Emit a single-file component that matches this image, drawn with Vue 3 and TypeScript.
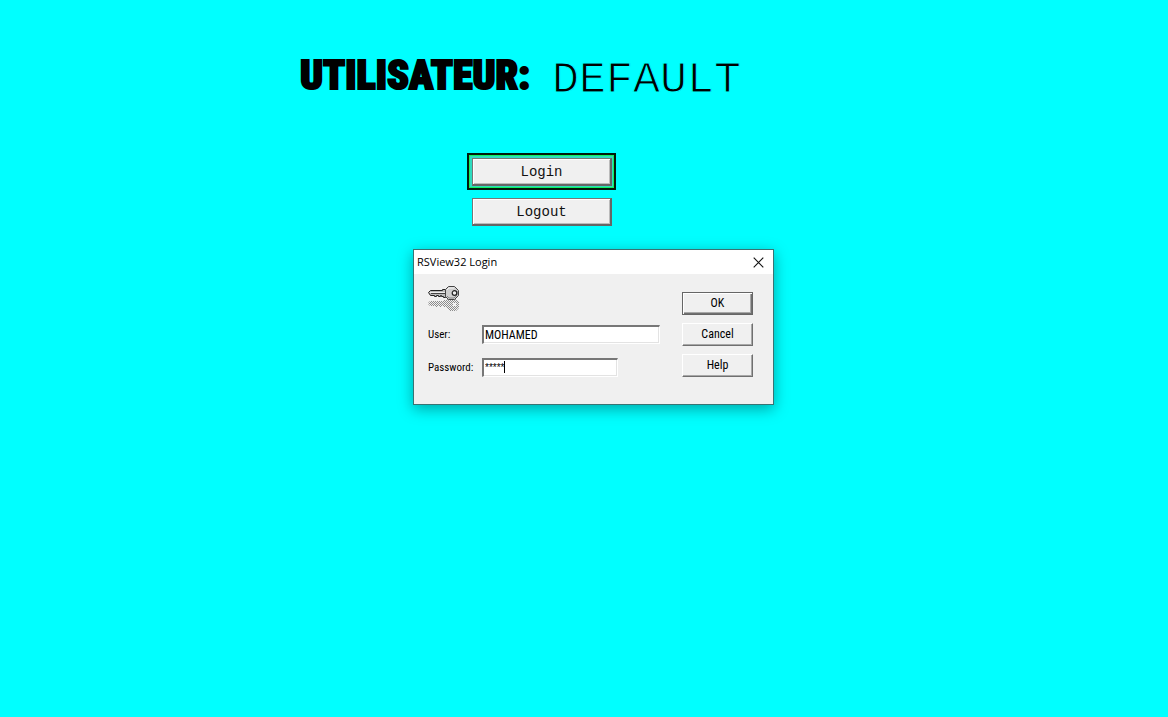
<script setup lang="ts">
import { onMounted, ref } from 'vue'

const user = ref('MOHAMED')
const password = ref('*****')
const activeUser = ref('DEFAULT')
const dialogOpen = ref(true)
const passwordBox = ref<HTMLInputElement | null>(null)

function openDialog() {
  dialogOpen.value = true
}

function closeDialog() {
  dialogOpen.value = false
}

function logout() {
  activeUser.value = 'DEFAULT'
}

function submit() {
  activeUser.value = user.value
  closeDialog()
}

onMounted(() => {
  const box = passwordBox.value
  if (box) {
    box.focus()
    box.setSelectionRange(box.value.length, box.value.length)
  }
})
</script>

<template>
  <main class="screen">
    <header class="status">
      <h1 class="status-label">UTILISATEUR:</h1>
      <span class="status-user">{{ activeUser }}</span>
    </header>

    <nav class="session" aria-label="Session">
      <div class="focus-frame">
        <button class="session-button" type="button" @click="openDialog">Login</button>
      </div>
      <button class="session-button" type="button" @click="logout">Logout</button>
    </nav>

    <form v-if="dialogOpen" class="dialog" role="dialog" aria-labelledby="dialog-title" @submit.prevent="submit">
      <div class="title-bar">
        <h2 id="dialog-title" class="title">RSView32 Login</h2>
        <button class="close" type="button" aria-label="Close" @click="closeDialog">
          <svg width="11" height="11" viewBox="0 0 11 11" aria-hidden="true">
            <path d="M.7.7 10.3 10.3M10.3.7.7 10.3" stroke="#111" stroke-width="1.1" fill="none" />
          </svg>
        </button>
      </div>
      <div class="dialog-body">
        <div class="fields">
          <svg class="key" width="32" height="26" viewBox="0 0 32 26" aria-hidden="true">
            <defs>
              <pattern id="dither" width="2" height="2" patternUnits="userSpaceOnUse">
                <path d="M0 0h1v1H0zM1 1h1v1H1z" fill="#8c8c8c" shape-rendering="crispEdges" />
              </pattern>
            </defs>
            <g fill="url(#dither)">
              <path d="M0 17l2-2h14v-1h3v1h2v8h-2v-2h-3v-1h-2v1h-2v-1H9v1H7v-1H2l-2-2z" />
              <path fill-rule="evenodd" d="M20 12h7l4 4v6l-3 3h-6l-4-4v-6zM25 17v3h3v-3z" />
            </g>
            <path d="M.5 6.5 2.5 4.5h12v-1h3v1h2v5h-2v2h-2v-1h-2v-1h-1v1h-2v-1h-2v1h-2v-1h-4z" fill="#bbb" stroke="#222" />
            <path d="M2 6.5h17" stroke="#eee" />
            <path d="M3 7.5h16" stroke="#444" />
            <path d="M20.5.5h6l4 4v5l-4 4h-6l-3-3v-7z" fill="#cfcfcf" stroke="#444" />
            <path d="M19 4l2-2h5" fill="none" stroke="#f4f4f4" />
            <path d="M19 10l2 2h5l3-3V5" fill="none" stroke="#858585" />
            <circle cx="26.5" cy="7" r="2.3" fill="#efefef" stroke="#222" stroke-width="1.2" />
          </svg>
          <div class="field">
            <label for="user">User:</label>
            <input id="user" v-model="user" class="text-box user-box" type="text" autocomplete="off" />
          </div>
          <div class="field">
            <label for="password">Password:</label>
            <div class="password-wrap">
              <input id="password" ref="passwordBox" v-model="password" class="text-box password-box" type="text" autocomplete="off" />
              <span class="caret"></span>
            </div>
          </div>
        </div>
        <div class="actions">
          <button class="action default" type="submit">OK</button>
          <button class="action" type="button" @click="closeDialog">Cancel</button>
          <button class="action" type="button">Help</button>
        </div>
      </div>
    </form>
  </main>
</template>

<style>
html,
body {
  background: #00ffff;
}
</style>

<style scoped>
.screen {
  position: relative;
  box-sizing: border-box;
  min-height: 100vh;
  padding-top: 48px;
  background: #00ffff;
  color: #000;
}

.status {
  display: flex;
  align-items: center;
  gap: 22px;
  height: 56px;
  padding-left: 300px;
  white-space: nowrap;
}

.status-label {
  margin: 0;
  font: 900 40px/56px Impact, "Roboto Condensed", Roboto, sans-serif;
  -webkit-text-stroke: 2px #000;
}

.status-user {
  padding-top: 10px;
  font: 45px/60px "Courier New", "Liberation Mono", monospace;
  -webkit-text-stroke: 1px #00ffff;
}

.session {
  display: flex;
  flex-direction: column;
  align-items: flex-start;
  gap: 8px;
  margin-top: 49px;
  padding-left: 467px;
}

.focus-frame {
  padding: 3px 2px 2px 3px;
  border: 2px solid #001a0c;
  background: #2fdcc0;
  box-shadow: inset 1px 1px #10f060, inset -1px -1px #10f060;
}

.session-button {
  display: block;
  box-sizing: border-box;
  width: 140px;
  height: 28px;
  padding: 1px 0 0;
  border: 1px solid #777;
  border-right: 2px solid #666;
  border-bottom: 2px solid #666;
  background: #f0f0f0;
  box-shadow: inset 1px 1px #fff, inset -1px -1px #bbb;
  color: #111;
  font: 14px/24px "Courier New", "Liberation Mono", monospace;
}

.focus-frame + .session-button {
  margin-left: 5px;
}

.dialog {
  position: absolute;
  top: 249px;
  left: 413px;
  box-sizing: border-box;
  width: 361px;
  border: 1px solid #387474;
  background: #f0f0f0;
  box-shadow: 0 4px 14px rgba(0, 0, 0, 0.35);
  font: 12px/14px "Roboto Condensed", Roboto, "Liberation Sans", sans-serif;
}

.title-bar {
  display: flex;
  align-items: center;
  justify-content: space-between;
  height: 24px;
  padding: 0 9px 0 3px;
  background: #fff;
}

.title {
  margin: 0;
  font: 11px/22px "Open Sans", "Noto Sans", sans-serif;
}

.close {
  display: flex;
  padding: 0;
  border: 0;
  background: none;
}

.dialog-body {
  display: flex;
  justify-content: space-between;
  padding: 12px 20px 27px 14px;
}

.fields {
  display: flex;
  flex-direction: column;
  gap: 14px;
}

.key {
  display: block;
  margin-bottom: -1px;
}

.field {
  display: flex;
  align-items: center;
}

.field label {
  width: 54px;
  font-size: 11px;
}

.text-box {
  display: block;
  box-sizing: border-box;
  height: 19px;
  padding: 0 1px 1px;
  border: 1px solid #fff;
  border-top: 2px solid #777;
  border-left: 2px solid #777;
  border-radius: 0;
  outline: 0;
  background: #fff;
  box-shadow: inset -1px -1px #e3e3e3;
  color: #000;
  font: inherit;
}

.user-box {
  width: 178px;
}

.password-wrap {
  position: relative;
}

.password-box {
  width: 136px;
  caret-color: transparent;
  font: 10px/14px "Liberation Sans", sans-serif;
}

.caret {
  position: absolute;
  top: 3px;
  left: 22px;
  width: 1px;
  height: 12px;
  background: #000;
}

.actions {
  display: flex;
  flex-direction: column;
  gap: 8px;
  padding-top: 6px;
}

.action {
  box-sizing: border-box;
  width: 71px;
  height: 23px;
  padding: 0 0 2px;
  border: 1px solid #fff;
  border-right-color: #707070;
  border-bottom-color: #707070;
  background: #f0f0f0;
  box-shadow: inset -1px -1px #a8a8a8;
  color: #000;
  font: inherit;
}

.default {
  border-color: #666;
  box-shadow: inset 1px 1px #fff, inset -1px -1px #707070, inset -2px -2px #a8a8a8;
}
</style>
